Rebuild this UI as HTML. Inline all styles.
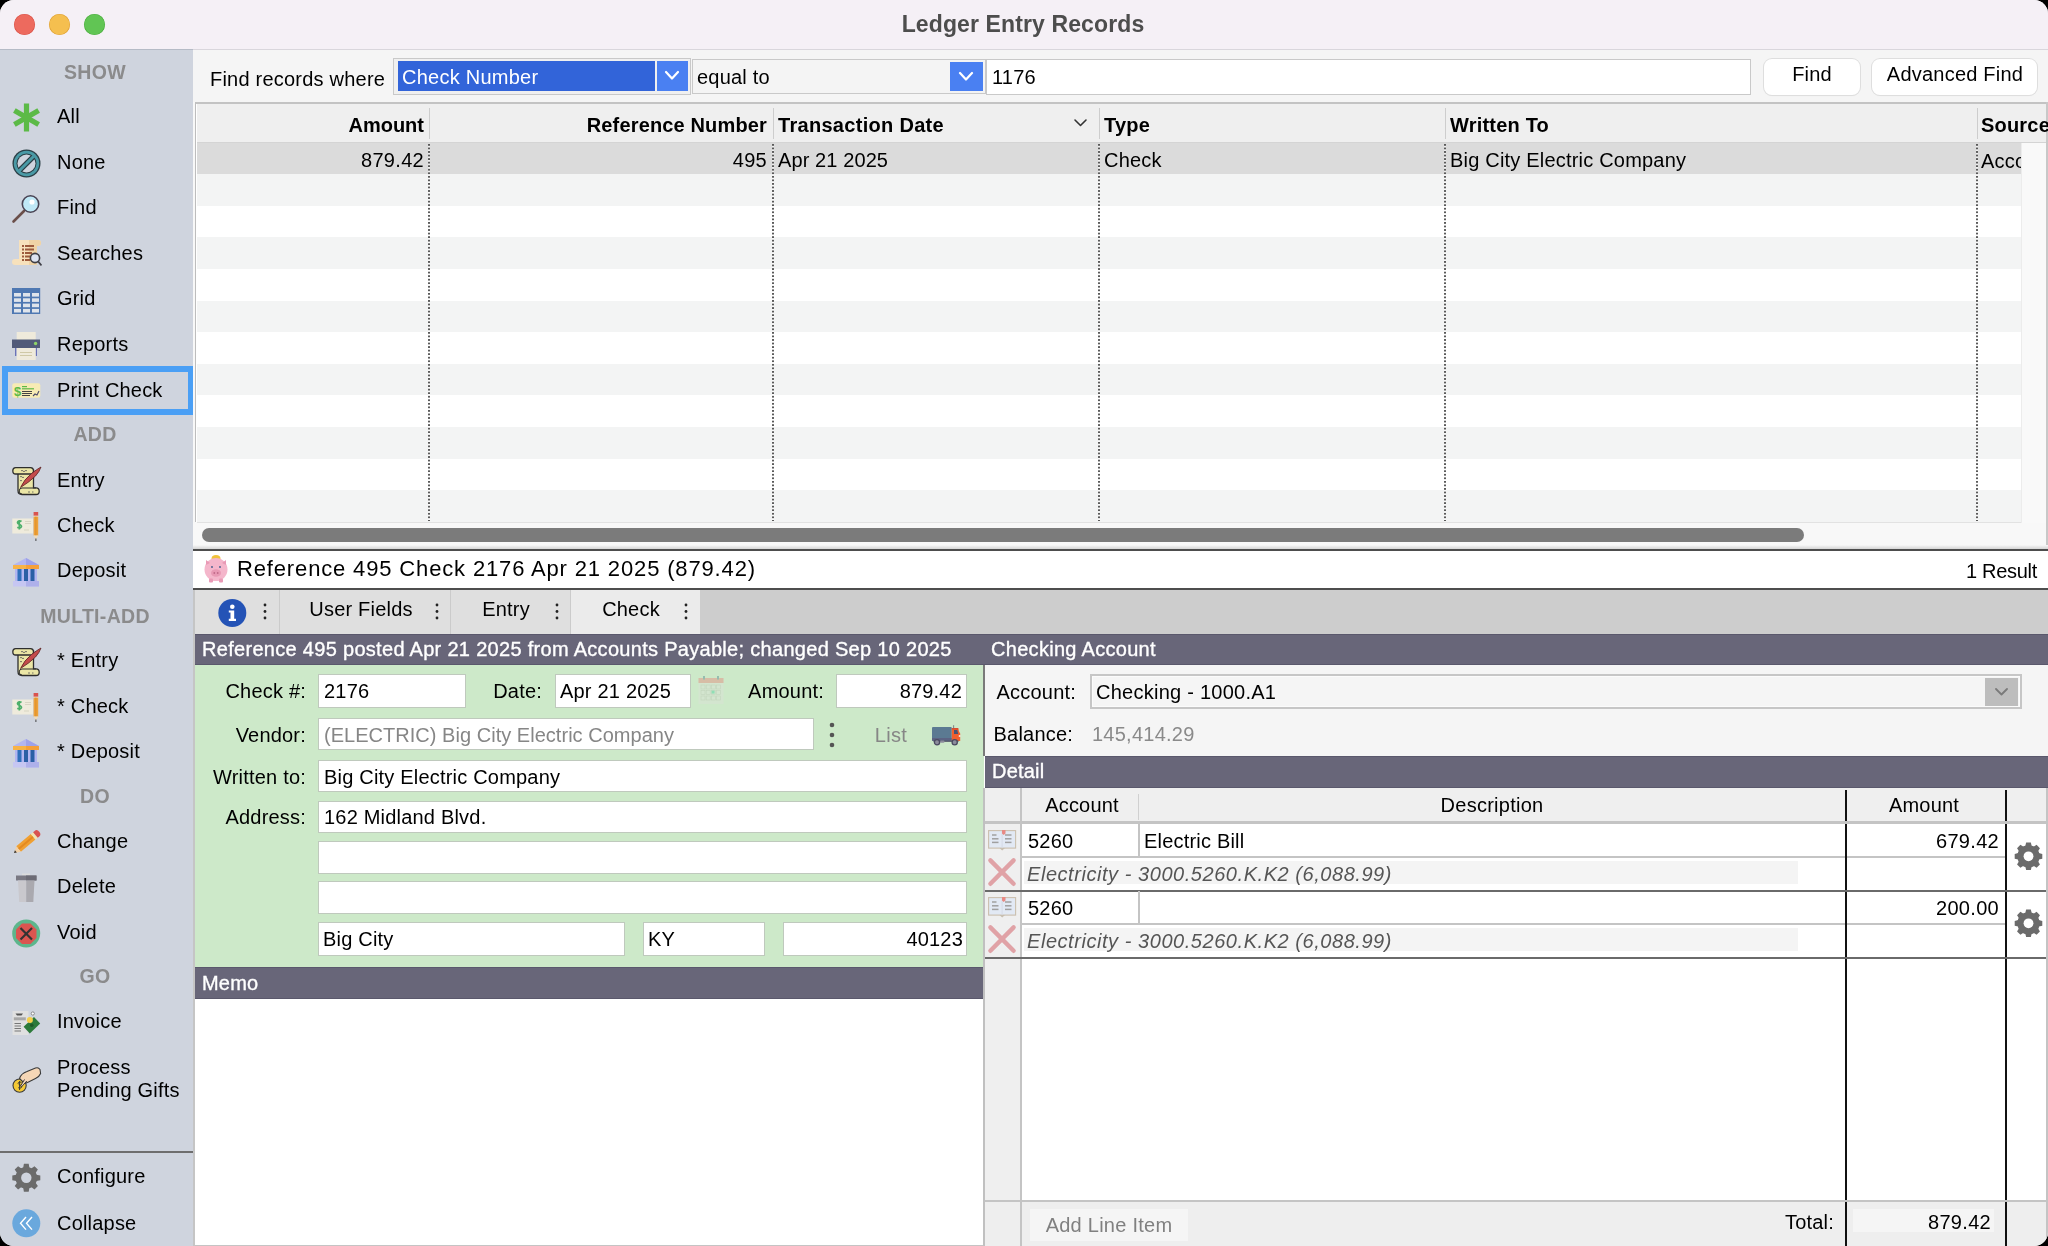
<!DOCTYPE html>
<html><head><meta charset="utf-8"><style>
html,body{margin:0;padding:0;background:#000;width:2048px;height:1246px;overflow:hidden}
#win{position:absolute;left:0;top:0;width:2048px;height:1246px;border-radius:14px;overflow:hidden;background:#f5f5f5;font-family:"Liberation Sans", sans-serif}
.t{position:absolute;white-space:pre;will-change:transform}
</style></head><body><div id="win">
<div style="position:absolute;left:0px;top:0px;width:2048px;height:49px;background:#f5f0f6"></div><div style="position:absolute;left:0px;top:49px;width:2048px;height:1px;background:#d9d6dc"></div><div style="position:absolute;left:14.0px;top:14px;width:21px;height:21px;background:#ed6a5e;border-radius:50%;box-shadow:inset 0 0 0 0.6px #d9544a"></div><div style="position:absolute;left:49.0px;top:14px;width:21px;height:21px;background:#f5bf4f;border-radius:50%;box-shadow:inset 0 0 0 0.6px #dea23a"></div><div style="position:absolute;left:84.0px;top:14px;width:21px;height:21px;background:#61c554;border-radius:50%;box-shadow:inset 0 0 0 0.6px #4fae43"></div><div class="t" style="left:422.5px;width:1200px;text-align:center;top:12.53px;font-size:23px;line-height:23px;font-weight:700;color:#4d4d4d;letter-spacing:0.12px;">Ledger Entry Records</div><div style="position:absolute;left:0px;top:50px;width:193px;height:1196px;background:#cfd4de"></div><div style="position:absolute;left:0px;top:49px;width:193px;height:1px;background:#b5bbc6"></div><div class="t" style="left:-505.5px;width:1200px;text-align:center;top:62.69px;font-size:19.5px;line-height:19.5px;font-weight:700;color:#8b8b8c;letter-spacing:0.3px;">SHOW</div><div class="t" style="left:-505.5px;width:1200px;text-align:center;top:425.39px;font-size:19.5px;line-height:19.5px;font-weight:700;color:#8b8b8c;letter-spacing:0.3px;">ADD</div><div class="t" style="left:-505.5px;width:1200px;text-align:center;top:606.79px;font-size:19.5px;line-height:19.5px;font-weight:700;color:#8b8b8c;letter-spacing:0.3px;">MULTI-ADD</div><div class="t" style="left:-505.5px;width:1200px;text-align:center;top:786.89px;font-size:19.5px;line-height:19.5px;font-weight:700;color:#8b8b8c;letter-spacing:0.3px;">DO</div><div class="t" style="left:-505.5px;width:1200px;text-align:center;top:967.29px;font-size:19.5px;line-height:19.5px;font-weight:700;color:#8b8b8c;letter-spacing:0.3px;">GO</div><div style="position:absolute;left:2px;top:366px;width:192px;height:49px;box-sizing:border-box;border:6px solid #4a9ff5"></div><div class="t" style="left:56.5px;top:106.27px;font-size:20px;line-height:20px;font-weight:400;color:#000;letter-spacing:0.2px;">All</div><div class="t" style="left:56.5px;top:152.07px;font-size:20px;line-height:20px;font-weight:400;color:#000;letter-spacing:0.2px;">None</div><div class="t" style="left:56.5px;top:196.67px;font-size:20px;line-height:20px;font-weight:400;color:#000;letter-spacing:0.2px;">Find</div><div class="t" style="left:56.5px;top:242.57px;font-size:20px;line-height:20px;font-weight:400;color:#000;letter-spacing:0.2px;">Searches</div><div class="t" style="left:56.5px;top:288.27px;font-size:20px;line-height:20px;font-weight:400;color:#000;letter-spacing:0.2px;">Grid</div><div class="t" style="left:56.5px;top:334.07px;font-size:20px;line-height:20px;font-weight:400;color:#000;letter-spacing:0.2px;">Reports</div><div class="t" style="left:56.5px;top:380.07px;font-size:20px;line-height:20px;font-weight:400;color:#000;letter-spacing:0.2px;">Print Check</div><div class="t" style="left:56.5px;top:469.87px;font-size:20px;line-height:20px;font-weight:400;color:#000;letter-spacing:0.2px;">Entry</div><div class="t" style="left:56.5px;top:514.87px;font-size:20px;line-height:20px;font-weight:400;color:#000;letter-spacing:0.2px;">Check</div><div class="t" style="left:56.5px;top:560.47px;font-size:20px;line-height:20px;font-weight:400;color:#000;letter-spacing:0.2px;">Deposit</div><div class="t" style="left:56.5px;top:649.97px;font-size:20px;line-height:20px;font-weight:400;color:#000;letter-spacing:0.2px;">* Entry</div><div class="t" style="left:56.5px;top:695.57px;font-size:20px;line-height:20px;font-weight:400;color:#000;letter-spacing:0.2px;">* Check</div><div class="t" style="left:56.5px;top:740.87px;font-size:20px;line-height:20px;font-weight:400;color:#000;letter-spacing:0.2px;">* Deposit</div><div class="t" style="left:56.5px;top:830.77px;font-size:20px;line-height:20px;font-weight:400;color:#000;letter-spacing:0.2px;">Change</div><div class="t" style="left:56.5px;top:876.27px;font-size:20px;line-height:20px;font-weight:400;color:#000;letter-spacing:0.2px;">Delete</div><div class="t" style="left:56.5px;top:921.87px;font-size:20px;line-height:20px;font-weight:400;color:#000;letter-spacing:0.2px;">Void</div><div class="t" style="left:56.5px;top:1011.27px;font-size:20px;line-height:20px;font-weight:400;color:#000;letter-spacing:0.2px;">Invoice</div><div class="t" style="left:56.5px;top:1057.07px;font-size:20px;line-height:20px;font-weight:400;color:#000;letter-spacing:0.2px;">Process</div><div class="t" style="left:56.5px;top:1079.87px;font-size:20px;line-height:20px;font-weight:400;color:#000;letter-spacing:0.2px;">Pending Gifts</div><div class="t" style="left:56.5px;top:1165.77px;font-size:20px;line-height:20px;font-weight:400;color:#000;letter-spacing:0.2px;">Configure</div><div class="t" style="left:56.5px;top:1213.07px;font-size:20px;line-height:20px;font-weight:400;color:#000;letter-spacing:0.2px;">Collapse</div><div style="position:absolute;left:0px;top:1151px;width:193px;height:2px;background:#6e6e6e"></div><svg style="position:absolute;left:12px;top:103px" width="29" height="29" viewBox="0 0 29 29"><g fill="#5cba47" transform="translate(14.5,14.5)"><rect x="-2.6" y="-14" width="5.2" height="28"/><rect x="-2.6" y="-14" width="5.2" height="28" transform="rotate(60)"/><rect x="-2.6" y="-14" width="5.2" height="28" transform="rotate(-60)"/></g></svg><svg style="position:absolute;left:11px;top:148px" width="31" height="31" viewBox="0 0 31 31"><circle cx="15.5" cy="15.5" r="14" fill="#2b3e45"/><circle cx="15.5" cy="15.5" r="12.7" fill="#4a9aa6"/><circle cx="15.5" cy="15.5" r="10" fill="#2b3e45"/><circle cx="15.5" cy="15.5" r="9" fill="#cfd4de"/><line x1="8.8" y1="22.2" x2="22.2" y2="8.8" stroke="#2b3e45" stroke-width="5.4"/><line x1="8.3" y1="22.7" x2="22.7" y2="8.3" stroke="#4a9aa6" stroke-width="3"/></svg><svg style="position:absolute;left:11px;top:193px" width="31" height="31" viewBox="0 0 31 31"><line x1="2.5" y1="28.5" x2="13" y2="18" stroke="#6b4f4a" stroke-width="2.6" stroke-linecap="round"/><circle cx="19.5" cy="11" r="8.2" fill="#bfe8f6" stroke="#4a4454" stroke-width="1.6"/><circle cx="21" cy="9" r="2.6" fill="#fff"/></svg><svg style="position:absolute;left:12px;top:239px" width="30" height="31" viewBox="0 0 30 31"><path d="M7 1 H26 Q29 1 29 4 Q29 7 26 7 H25 V26 H3 Q0 26 0 23 Q0 20 3 20 H7 Z" fill="#f7e1bc"/><path d="M17 1 H26 Q29 1 29 4 Q29 7 26 7 H25 V26 H17 Z" fill="#efd3a6"/><g fill="#9c5a3c"><rect x="10" y="6" width="2" height="2"/><rect x="13" y="6" width="9" height="2"/><rect x="10" y="9.5" width="2" height="2"/><rect x="13" y="9.5" width="9" height="2"/><rect x="10" y="13" width="2" height="2"/><rect x="13" y="13" width="7" height="2"/><rect x="10" y="16.5" width="2" height="2"/><rect x="13" y="16.5" width="5" height="2"/><rect x="10" y="20" width="2" height="2"/><rect x="13" y="20" width="5" height="2"/></g><circle cx="23" cy="19" r="4.6" fill="#dde3f0" stroke="#3f3f46" stroke-width="1.6"/><line x1="26.2" y1="22.5" x2="29.5" y2="26.5" stroke="#3f3f46" stroke-width="1.8"/></svg><svg style="position:absolute;left:12px;top:288px" width="29" height="27" viewBox="0 0 29 27"><rect x="0" y="0" width="28.2" height="26" fill="#4f78b2"/><rect x="2" y="5.0" width="7" height="3.6" fill="#dfe4eb"/><rect x="11" y="5.0" width="7" height="3.6" fill="#dfe4eb"/><rect x="20" y="5.0" width="7" height="3.6" fill="#dfe4eb"/><rect x="2" y="10.3" width="7" height="3.6" fill="#dfe4eb"/><rect x="11" y="10.3" width="7" height="3.6" fill="#dfe4eb"/><rect x="20" y="10.3" width="7" height="3.6" fill="#dfe4eb"/><rect x="2" y="15.6" width="7" height="3.6" fill="#dfe4eb"/><rect x="11" y="15.6" width="7" height="3.6" fill="#dfe4eb"/><rect x="20" y="15.6" width="7" height="3.6" fill="#dfe4eb"/><rect x="2" y="20.9" width="7" height="3.6" fill="#dfe4eb"/><rect x="11" y="20.9" width="7" height="3.6" fill="#dfe4eb"/><rect x="20" y="20.9" width="7" height="3.6" fill="#dfe4eb"/></svg><svg style="position:absolute;left:12px;top:331px" width="29" height="30" viewBox="0 0 29 30"><rect x="4.7" y="1" width="19" height="9" fill="#efeadb"/><rect x="0" y="8.5" width="28" height="8.5" fill="#515a79"/><circle cx="23.6" cy="12.5" r="1.7" fill="#8fd468"/><rect x="3" y="17" width="1.5" height="8" fill="#6a72b8"/><rect x="23.5" y="17" width="1.5" height="8" fill="#6a72b8"/><rect x="4.7" y="17" width="19" height="12" fill="#efeadb"/><rect x="8" y="21" width="12" height="1" fill="#cfc8a6"/><rect x="8" y="24" width="12" height="1" fill="#cfc8a6"/></svg><svg style="position:absolute;left:12px;top:383px" width="29" height="16" viewBox="0 0 29 16"><rect x="0.3" y="0.2" width="28" height="14.5" rx="2" fill="#f7ebb4"/><text x="2" y="12.5" font-family="Liberation Sans" font-weight="700" font-size="13" fill="#5cba47">$</text><rect x="10" y="3" width="5" height="1.2" fill="#5cba47"/><rect x="10" y="5.2" width="12" height="1.2" fill="#5cba47"/><rect x="10" y="8" width="10" height="1" fill="#444"/><rect x="10" y="10" width="10" height="1" fill="#444"/><rect x="10" y="12" width="8" height="1" fill="#444"/><path d="M21 13 L23 11 L25 12 L27 8" stroke="#4a4a6a" stroke-width="1.1" fill="none"/></svg><svg style="position:absolute;left:12px;top:466px" width="30" height="30" viewBox="0 0 30 30"><path d="M6 4 V24.5 Q6 28.5 10 28.5 H24 Q27.2 28.5 27.2 25.2 Q27.2 21.8 24 21.8 H21.5 V4 Z" fill="#ebe6a6" stroke="#2e2e2e" stroke-width="1.3"/><path d="M3.6 1.6 H18.5 Q21.5 1.6 21.5 4.8 Q21.5 8 18.5 8 H3.6 Q0.8 8 0.8 4.8 Q0.8 1.6 3.6 1.6 Z" fill="#ebe6a6" stroke="#2e2e2e" stroke-width="1.3"/><path d="M10 28 Q7.2 28 7.2 25 Q7.2 22 10 22 H24" fill="none" stroke="#2e2e2e" stroke-width="1"/><g stroke="#555" stroke-width="0.8" fill="none"><path d="M9 5 q1 -1.5 2 0 q1 1.5 2 0 q1 -1.5 2 0"/><path d="M8 11 q1 -1.5 2 0 q1 1.5 2 0"/><path d="M8 15 q1 -1.5 2 0"/><path d="M16 26 h2 M20 26 h1.5"/></g><path d="M8.5 21.5 Q12 13.5 19.5 7.5 Q24.5 3.5 29 1 Q27.5 5.5 23.5 10 Q17.5 16 8.5 21.5 Z" fill="#c44b4b" stroke="#5a2222" stroke-width="0.8"/></svg><svg style="position:absolute;left:12px;top:647px" width="30" height="30" viewBox="0 0 30 30"><path d="M6 4 V24.5 Q6 28.5 10 28.5 H24 Q27.2 28.5 27.2 25.2 Q27.2 21.8 24 21.8 H21.5 V4 Z" fill="#ebe6a6" stroke="#2e2e2e" stroke-width="1.3"/><path d="M3.6 1.6 H18.5 Q21.5 1.6 21.5 4.8 Q21.5 8 18.5 8 H3.6 Q0.8 8 0.8 4.8 Q0.8 1.6 3.6 1.6 Z" fill="#ebe6a6" stroke="#2e2e2e" stroke-width="1.3"/><path d="M10 28 Q7.2 28 7.2 25 Q7.2 22 10 22 H24" fill="none" stroke="#2e2e2e" stroke-width="1"/><g stroke="#555" stroke-width="0.8" fill="none"><path d="M9 5 q1 -1.5 2 0 q1 1.5 2 0 q1 -1.5 2 0"/><path d="M8 11 q1 -1.5 2 0 q1 1.5 2 0"/><path d="M8 15 q1 -1.5 2 0"/><path d="M16 26 h2 M20 26 h1.5"/></g><path d="M8.5 21.5 Q12 13.5 19.5 7.5 Q24.5 3.5 29 1 Q27.5 5.5 23.5 10 Q17.5 16 8.5 21.5 Z" fill="#c44b4b" stroke="#5a2222" stroke-width="0.8"/></svg><svg style="position:absolute;left:12px;top:511px" width="30" height="31" viewBox="0 0 30 31"><rect x="0.3" y="7.5" width="20.7" height="15" fill="#efebdc"/><path d="M9.5 10.5 q-1.6 -1.2 -3.2 -0.2 q-1.6 1.2 0 2.4 l2.4 1.4 q1.6 1.2 0 2.4 q-1.6 1 -3.4 -0.2 M7.3 9 V18.4" fill="none" stroke="#4caf6a" stroke-width="1.7"/><g stroke="#cfcbb8" stroke-width="0.7"><line x1="13" y1="10.5" x2="19" y2="10.5"/><line x1="13" y1="12.5" x2="19" y2="12.5"/><line x1="12" y1="19" x2="17" y2="19"/></g><rect x="21.6" y="1" width="4.6" height="3.8" fill="#d9534f"/><rect x="21.6" y="4.8" width="4.6" height="0.8" fill="#f4ecd8"/><rect x="21.6" y="5.6" width="4.6" height="19" fill="#eea23a"/><rect x="23.5" y="5.6" width="0.8" height="19" fill="#d98a24"/><path d="M21.6 24.6 L26.2 24.6 L23.9 28.5 Z" fill="#f1dcb8"/><line x1="23.9" y1="27.5" x2="23.9" y2="30" stroke="#333" stroke-width="0.9"/></svg><svg style="position:absolute;left:12px;top:692px" width="30" height="31" viewBox="0 0 30 31"><rect x="0.3" y="7.5" width="20.7" height="15" fill="#efebdc"/><path d="M9.5 10.5 q-1.6 -1.2 -3.2 -0.2 q-1.6 1.2 0 2.4 l2.4 1.4 q1.6 1.2 0 2.4 q-1.6 1 -3.4 -0.2 M7.3 9 V18.4" fill="none" stroke="#4caf6a" stroke-width="1.7"/><g stroke="#cfcbb8" stroke-width="0.7"><line x1="13" y1="10.5" x2="19" y2="10.5"/><line x1="13" y1="12.5" x2="19" y2="12.5"/><line x1="12" y1="19" x2="17" y2="19"/></g><rect x="21.6" y="1" width="4.6" height="3.8" fill="#d9534f"/><rect x="21.6" y="4.8" width="4.6" height="0.8" fill="#f4ecd8"/><rect x="21.6" y="5.6" width="4.6" height="19" fill="#eea23a"/><rect x="23.5" y="5.6" width="0.8" height="19" fill="#d98a24"/><path d="M21.6 24.6 L26.2 24.6 L23.9 28.5 Z" fill="#f1dcb8"/><line x1="23.9" y1="27.5" x2="23.9" y2="30" stroke="#333" stroke-width="0.9"/></svg><svg style="position:absolute;left:13px;top:558px" width="27" height="29" viewBox="0 0 27 29"><path d="M13 0 L26 7 L0 7 Z" fill="#b3b6f0"/><path d="M13 0 L26 7 L13 7 Z" fill="#9ea2ea"/><rect x="0" y="7" width="26" height="4" fill="#f7b347"/><rect x="13" y="7" width="13" height="4" fill="#f5a03a"/><rect x="2" y="11" width="22" height="12" fill="#b3b6f0"/><rect x="4.5" y="11" width="4" height="12" fill="#2f70bb"/><rect x="11" y="11" width="4" height="12" fill="#2a5fa5"/><rect x="17.5" y="11" width="4" height="12" fill="#2a5fa5"/><rect x="0" y="23" width="26" height="5.5" fill="#c6c6f2"/><rect x="13" y="23" width="13" height="5.5" fill="#aeb0ea"/></svg><svg style="position:absolute;left:13px;top:739px" width="27" height="29" viewBox="0 0 27 29"><path d="M13 0 L26 7 L0 7 Z" fill="#b3b6f0"/><path d="M13 0 L26 7 L13 7 Z" fill="#9ea2ea"/><rect x="0" y="7" width="26" height="4" fill="#f7b347"/><rect x="13" y="7" width="13" height="4" fill="#f5a03a"/><rect x="2" y="11" width="22" height="12" fill="#b3b6f0"/><rect x="4.5" y="11" width="4" height="12" fill="#2f70bb"/><rect x="11" y="11" width="4" height="12" fill="#2a5fa5"/><rect x="17.5" y="11" width="4" height="12" fill="#2a5fa5"/><rect x="0" y="23" width="26" height="5.5" fill="#c6c6f2"/><rect x="13" y="23" width="13" height="5.5" fill="#aeb0ea"/></svg><svg style="position:absolute;left:11px;top:826px" width="32" height="32" viewBox="0 0 32 32"><g transform="translate(16,16) rotate(-40)"><rect x="-11" y="-3.6" width="19" height="7.2" fill="#f0a032"/><rect x="-11" y="-1" width="19" height="2" fill="#e48a20"/><rect x="8" y="-3.6" width="3" height="7.2" fill="#f2e6b0"/><path d="M11 -3.6 L13 -3.6 Q16 -3.6 16 0 Q16 3.6 13 3.6 L11 3.6 Z" fill="#d9534f"/><path d="M-11 -3.6 L-17 0 L-11 3.6 Z" fill="#f3d1a6"/><path d="M-14.5 -1.5 L-17 0 L-14.5 1.5 Z" fill="#333"/></g></svg><svg style="position:absolute;left:15px;top:873px" width="23" height="31" viewBox="0 0 23 31"><rect x="7" y="0.5" width="8" height="2" fill="#dcdcdc"/><rect x="1" y="2.5" width="20.5" height="5" fill="#7a7983"/><rect x="11" y="2.5" width="10.5" height="5" fill="#6c6b75"/><path d="M3 7.5 L11.2 7.5 L11.2 29 L4.2 29 Z" fill="#c9c8cd"/><path d="M11.2 7.5 L19.5 7.5 L18.3 29 L11.2 29 Z" fill="#aaa9af"/></svg><svg style="position:absolute;left:12px;top:919px" width="29" height="29" viewBox="0 0 29 29"><circle cx="14.2" cy="14.5" r="14" fill="#5db68c"/><path d="M10 4.5 L18.5 4.5 L24.5 10.5 L24.5 19 L18.5 25 L10 25 L4 19 L4 10.5 Z" fill="#db5550"/><g stroke="#333" stroke-width="2.2"><line x1="8.5" y1="9" x2="20" y2="20.5"/><line x1="20" y1="9" x2="8.5" y2="20.5"/></g></svg><svg style="position:absolute;left:12px;top:1009px" width="30" height="28" viewBox="0 0 30 28"><rect x="0.5" y="2" width="16" height="24" fill="#e0e0e0"/><path d="M3.5 4.5 H11 L9.5 6.5 H5 Z" fill="#555"/><rect x="1.8" y="8.3" width="12" height="3" fill="#a8a8a8"/><g fill="#777"><rect x="2.5" y="14" width="6.5" height="1"/><rect x="2.5" y="16.5" width="6.5" height="1"/><rect x="2.5" y="19" width="6.5" height="1"/><rect x="2.5" y="21.5" width="6.5" height="1"/></g><path d="M11.6 17.8 L22 8 L28.2 14.5 L17.8 24.6 Z" fill="#2c7a3a"/><circle cx="19.8" cy="16.3" r="1.8" fill="#1f5a28"/><circle cx="17.9" cy="11" r="3" fill="#f5d04a"/><circle cx="20.8" cy="4.5" r="1.6" fill="#fff" stroke="#777" stroke-width="0.8"/></svg><svg style="position:absolute;left:12px;top:1063px" width="30" height="32" viewBox="0 0 30 32"><circle cx="7.6" cy="22.6" r="6.6" fill="#f4c935" stroke="#3a3a3a" stroke-width="1.1"/><path d="M9.5 19.5 q-1.5 -1 -3 0 q-1 1 0.5 2 l2 1 q1.5 1 0.3 2.2 q-1.4 1 -3 0 M7.6 18 V27" fill="none" stroke="#3a3a3a" stroke-width="1"/><path d="M7.5 15.5 Q9 10.5 15 8.5 L23.5 5 Q26.5 4 28 6.5 L28.6 10.5 Q27.5 13.5 23.5 15.5 L16.5 19 Q13.5 20.5 11.5 19.5 Z" fill="#f5d6b6" stroke="#3a3a3a" stroke-width="1.1"/><path d="M12.5 16.5 L8.8 22.5 Q8.4 24 9.8 23.5 L14.8 18" fill="#f5d6b6" stroke="#3a3a3a" stroke-width="1"/></svg><svg style="position:absolute;left:11px;top:1163px" width="31" height="31" viewBox="0 0 31 31"><polygon points="25.33,11.70 29.30,12.40 29.30,17.20 25.33,17.90 24.59,19.70 26.89,23.00 23.50,26.39 20.20,24.09 18.40,24.83 17.70,28.80 12.90,28.80 12.20,24.83 10.40,24.09 7.10,26.39 3.71,23.00 6.01,19.70 5.27,17.90 1.30,17.20 1.30,12.40 5.27,11.70 6.01,9.90 3.71,6.60 7.10,3.21 10.40,5.51 12.20,4.77 12.90,0.80 17.70,0.80 18.40,4.77 20.20,5.51 23.50,3.21 26.89,6.60 24.59,9.90" fill="#6b6b6b"/><circle cx="15.3" cy="14.8" r="10.8" fill="#6b6b6b"/><circle cx="15.3" cy="14.8" r="5.2" fill="#cfd4de"/></svg><svg style="position:absolute;left:12px;top:1209px" width="29" height="29" viewBox="0 0 29 29"><circle cx="14.3" cy="14.3" r="14" fill="#6aa8dd"/><g stroke="#fff" stroke-width="1.4" fill="none"><path d="M14 8 L8.5 14.3 L14 20.6"/><path d="M20 8 L14.5 14.3 L20 20.6"/></g></svg><div style="position:absolute;left:193px;top:50px;width:1855px;height:52px;background:#f5f5f5"></div><div class="t" style="left:210px;top:69.07px;font-size:20px;line-height:20px;font-weight:400;color:#000;letter-spacing:0.22px;">Find records where</div><div style="position:absolute;left:393px;top:58px;width:298px;height:36.5px;background:#f0f0f0;box-sizing:border-box;border:1.5px solid #c9c9c9"></div><div style="position:absolute;left:398px;top:61px;width:256.5px;height:30px;background:#3264d9"></div><div style="position:absolute;left:656.5px;top:61px;width:31.5px;height:30px;background:#4a80f2"></div><div class="t" style="left:402px;top:66.67px;font-size:20px;line-height:20px;font-weight:400;color:#fff;letter-spacing:0.25px;">Check Number</div><svg style="position:absolute;left:663.5px;top:70.25px" width="16" height="10.5" viewBox="0 0 16 10.5"><path d="M2 2 L8.0 8.5 L14 2" fill="none" stroke="#fff" stroke-width="2.2" stroke-linecap="round" stroke-linejoin="round"/></svg><div style="position:absolute;left:692px;top:59px;width:294px;height:35px;background:#f4f4f4;box-sizing:border-box;border:1.5px solid #c9c9c9"></div><div style="position:absolute;left:949.5px;top:61.5px;width:33.5px;height:29.5px;background:#4a80f2"></div><svg style="position:absolute;left:958.0px;top:70.75px" width="16" height="10.5" viewBox="0 0 16 10.5"><path d="M2 2 L8.0 8.5 L14 2" fill="none" stroke="#fff" stroke-width="2.2" stroke-linecap="round" stroke-linejoin="round"/></svg><div class="t" style="left:697px;top:67.07px;font-size:20px;line-height:20px;font-weight:400;color:#000;letter-spacing:0.22px;">equal to</div><div style="position:absolute;left:986px;top:59px;width:765px;height:36px;background:#fff;box-sizing:border-box;border:1.5px solid #c9c9c9"></div><div class="t" style="left:992px;top:67.07px;font-size:20px;line-height:20px;font-weight:400;color:#000;letter-spacing:0.2px;">1176</div><div style="position:absolute;left:1763.5px;top:58.5px;width:96.5px;height:36px;background:#fff;border-radius:8px;box-shadow:0 0 0 1px #dedede, 0 1px 1px rgba(0,0,0,0.08)"></div><div class="t" style="left:1211.7px;width:1200px;text-align:center;top:64.07px;font-size:20px;line-height:20px;font-weight:400;color:#000;letter-spacing:0.2px;">Find</div><div style="position:absolute;left:1872px;top:58.5px;width:165.3px;height:36px;background:#fff;border-radius:8px;box-shadow:0 0 0 1px #dedede, 0 1px 1px rgba(0,0,0,0.08)"></div><div class="t" style="left:1354.6px;width:1200px;text-align:center;top:64.07px;font-size:20px;line-height:20px;font-weight:400;color:#000;letter-spacing:0.22px;">Advanced Find</div><div style="position:absolute;left:193px;top:102px;width:1855px;height:449px;background:#f8f8f8"></div><div style="position:absolute;left:195px;top:102px;width:1851px;height:420px;box-sizing:border-box;border-top:2px solid #c3c3c3;border-left:1.5px solid #bdbdbd;background:#fff"></div><div style="position:absolute;left:196.5px;top:104px;width:1849.5px;height:38px;background:#efefef"></div><div style="position:absolute;left:196.5px;top:141.5px;width:1849.5px;height:1px;background:#d4d4d4"></div><div style="position:absolute;left:196.5px;top:142.5px;width:1824px;height:31.3px;background:#dbdbdb"></div><div style="position:absolute;left:196.5px;top:174.2px;width:1824.3px;height:31.6px;background:#f3f4f4"></div><div style="position:absolute;left:196.5px;top:237.39999999999998px;width:1824.3px;height:31.6px;background:#f3f4f4"></div><div style="position:absolute;left:196.5px;top:300.6px;width:1824.3px;height:31.6px;background:#f3f4f4"></div><div style="position:absolute;left:196.5px;top:363.80000000000007px;width:1824.3px;height:31.6px;background:#f3f4f4"></div><div style="position:absolute;left:196.5px;top:427.0000000000001px;width:1824.3px;height:31.6px;background:#f3f4f4"></div><div style="position:absolute;left:196.5px;top:490.20000000000016px;width:1824.3px;height:31.499999999999886px;background:#f3f4f4"></div><div style="position:absolute;left:196.5px;top:521.5px;width:1824.3px;height:1px;background:#e2e2e2"></div><div style="position:absolute;left:2020.8px;top:142.5px;width:25px;height:380px;background:#f9f9f9;box-shadow:inset 1px 0 0 #ececec"></div><div style="position:absolute;left:2045.5px;top:102px;width:2.5px;height:449px;background:#c8c8c8"></div><div style="position:absolute;left:428.5px;top:108px;width:1px;height:31px;background:#cdcdcd"></div><div style="position:absolute;left:428px;top:144px;width:2px;height:377px;background-image:linear-gradient(#5a5a5a 50%, rgba(255,255,255,0.55) 50%);background-size:2px 3.55px"></div><div style="position:absolute;left:772.5px;top:108px;width:1px;height:31px;background:#cdcdcd"></div><div style="position:absolute;left:772px;top:144px;width:2px;height:377px;background-image:linear-gradient(#5a5a5a 50%, rgba(255,255,255,0.55) 50%);background-size:2px 3.55px"></div><div style="position:absolute;left:1098.5px;top:108px;width:1px;height:31px;background:#cdcdcd"></div><div style="position:absolute;left:1098px;top:144px;width:2px;height:377px;background-image:linear-gradient(#5a5a5a 50%, rgba(255,255,255,0.55) 50%);background-size:2px 3.55px"></div><div style="position:absolute;left:1444.5px;top:108px;width:1px;height:31px;background:#cdcdcd"></div><div style="position:absolute;left:1444px;top:144px;width:2px;height:377px;background-image:linear-gradient(#5a5a5a 50%, rgba(255,255,255,0.55) 50%);background-size:2px 3.55px"></div><div style="position:absolute;left:1976.5px;top:108px;width:1px;height:31px;background:#cdcdcd"></div><div style="position:absolute;left:1976px;top:144px;width:2px;height:377px;background-image:linear-gradient(#5a5a5a 50%, rgba(255,255,255,0.55) 50%);background-size:2px 3.55px"></div><div class="t" style="left:-776px;width:1200px;text-align:right;top:115.27px;font-size:20px;line-height:20px;font-weight:700;color:#000;letter-spacing:0.0px;">Amount</div><div class="t" style="left:-433px;width:1200px;text-align:right;top:115.27px;font-size:20px;line-height:20px;font-weight:700;color:#000;letter-spacing:0.15px;">Reference Number</div><div class="t" style="left:778px;top:115.27px;font-size:20px;line-height:20px;font-weight:700;color:#000;letter-spacing:0.3px;">Transaction Date</div><svg style="position:absolute;left:1072.5px;top:118.25px" width="15" height="9.5" viewBox="0 0 15 9.5"><path d="M2 2 L7.5 7.5 L13 2" fill="none" stroke="#333" stroke-width="1.6" stroke-linecap="round" stroke-linejoin="round"/></svg><div class="t" style="left:1104px;top:115.27px;font-size:20px;line-height:20px;font-weight:700;color:#000;letter-spacing:0.2px;">Type</div><div class="t" style="left:1450px;top:115.27px;font-size:20px;line-height:20px;font-weight:700;color:#000;letter-spacing:0.2px;">Written To</div><div class="t" style="left:1981px;top:115.27px;font-size:20px;line-height:20px;font-weight:700;color:#000;letter-spacing:0.2px;">Source</div><div class="t" style="left:-776px;width:1200px;text-align:right;top:150.47px;font-size:20px;line-height:20px;font-weight:400;color:#000;letter-spacing:0.3px;">879.42</div><div class="t" style="left:-433.5px;width:1200px;text-align:right;top:150.47px;font-size:20px;line-height:20px;font-weight:400;color:#000;letter-spacing:0.3px;">495</div><div class="t" style="left:778px;top:150.47px;font-size:20px;line-height:20px;font-weight:400;color:#000;letter-spacing:0.1px;">Apr 21 2025</div><div class="t" style="left:1104px;top:150.47px;font-size:20px;line-height:20px;font-weight:400;color:#000;letter-spacing:0.2px;">Check</div><div class="t" style="left:1450px;top:150.47px;font-size:20px;line-height:20px;font-weight:400;color:#000;letter-spacing:0.2px;">Big City Electric Company</div><div style="position:absolute;left:1979px;top:142.5px;width:41.8px;height:31px;overflow:hidden"><div class="t" style="left:2px;top:8.5px;font-size:20px;line-height:20px;letter-spacing:0.2px">Accounts</div></div><div style="position:absolute;left:202px;top:528.2px;width:1602px;height:13.7px;background:#7b7b7b;border-radius:7px"></div><div style="position:absolute;left:193px;top:545px;width:1855px;height:4px;background:linear-gradient(#f8f8f8,#d5d5d5)"></div><div style="position:absolute;left:193px;top:549px;width:1855px;height:2px;background:#4d4d4d"></div><div style="position:absolute;left:193px;top:551px;width:1855px;height:37.5px;background:#fff"></div><div style="position:absolute;left:193px;top:588px;width:1855px;height:1.5px;background:#4d4d4d"></div><div class="t" style="left:237.4px;top:558.48px;font-size:22px;line-height:22px;font-weight:400;color:#000;letter-spacing:0.85px;">Reference 495 Check 2176 Apr 21 2025 (879.42)</div><div class="t" style="left:836.5px;width:1200px;text-align:right;top:560.57px;font-size:20px;line-height:20px;font-weight:400;color:#000;letter-spacing:-0.3px;">1 Result</div><svg style="position:absolute;left:203px;top:554px" width="26" height="29" viewBox="0 0 26 29"><ellipse cx="13" cy="4.5" rx="4.5" ry="3.5" fill="#f0c23a"/><circle cx="13" cy="15.5" r="11.5" fill="#f4b6cb"/><path d="M3 6 L7 9 L3 11 Z" fill="#e99ab6"/><path d="M23 6 L19 9 L23 11 Z" fill="#e99ab6"/><ellipse cx="13" cy="19" rx="5" ry="3.8" fill="#e899b4"/><circle cx="11.3" cy="19" r="0.9" fill="#c06a8a"/><circle cx="14.7" cy="19" r="0.9" fill="#c06a8a"/><circle cx="9" cy="13" r="0.9" fill="#3c5a8a"/><circle cx="17" cy="13" r="0.9" fill="#3c5a8a"/><rect x="6" y="24.5" width="4" height="4" rx="1" fill="#e99ab6"/><rect x="16" y="24.5" width="4" height="4" rx="1" fill="#e99ab6"/></svg><div style="position:absolute;left:193px;top:589.5px;width:1855px;height:44.5px;background:#cdcdcd"></div><div style="position:absolute;left:195px;top:589.5px;width:84px;height:44.5px;background:#dfdfdf"></div><div style="position:absolute;left:279px;top:589.5px;width:172px;height:44.5px;background:#dfdfdf;box-shadow:inset 1px 0 0 #cbcbcb, inset -1px 0 0 #cbcbcb"></div><div style="position:absolute;left:451px;top:589.5px;width:120px;height:44.5px;background:#dfdfdf;box-shadow:inset -1px 0 0 #cbcbcb"></div><div style="position:absolute;left:571px;top:589.5px;width:128.5px;height:44.5px;background:#ebebeb"></div><div style="position:absolute;left:193px;top:589.5px;width:2px;height:44.5px;background:#c5c5c5"></div><svg style="position:absolute;left:217.5px;top:598.5px" width="29" height="29" viewBox="0 0 29 29"><circle cx="14.3" cy="14" r="14" fill="#2453b6"/><circle cx="14.3" cy="7.8" r="2.3" fill="#fff"/><path d="M10.8 11.5 H16.2 V19.8 H18 V22 H10.8 V19.8 H12.5 V13.6 H10.8 Z" fill="#fff"/></svg><svg style="position:absolute;left:262px;top:602.3px" width="6" height="19.0" viewBox="0 0 6 19.0"><circle cx="3" cy="3.0" r="1.4" fill="#222"/><circle cx="3" cy="9.5" r="1.4" fill="#222"/><circle cx="3" cy="16.0" r="1.4" fill="#222"/></svg><div class="t" style="left:-239.5px;width:1200px;text-align:center;top:599.27px;font-size:20px;line-height:20px;font-weight:400;color:#000;letter-spacing:0.2px;">User Fields</div><svg style="position:absolute;left:434.4px;top:602.3px" width="6" height="19.0" viewBox="0 0 6 19.0"><circle cx="3" cy="3.0" r="1.4" fill="#222"/><circle cx="3" cy="9.5" r="1.4" fill="#222"/><circle cx="3" cy="16.0" r="1.4" fill="#222"/></svg><div class="t" style="left:-94.0px;width:1200px;text-align:center;top:599.27px;font-size:20px;line-height:20px;font-weight:400;color:#000;letter-spacing:0.2px;">Entry</div><svg style="position:absolute;left:553.5px;top:602.3px" width="6" height="19.0" viewBox="0 0 6 19.0"><circle cx="3" cy="3.0" r="1.4" fill="#222"/><circle cx="3" cy="9.5" r="1.4" fill="#222"/><circle cx="3" cy="16.0" r="1.4" fill="#222"/></svg><div class="t" style="left:30.5px;width:1200px;text-align:center;top:599.27px;font-size:20px;line-height:20px;font-weight:400;color:#000;letter-spacing:0.2px;">Check</div><svg style="position:absolute;left:682.5px;top:602.3px" width="6" height="19.0" viewBox="0 0 6 19.0"><circle cx="3" cy="3.0" r="1.4" fill="#222"/><circle cx="3" cy="9.5" r="1.4" fill="#222"/><circle cx="3" cy="16.0" r="1.4" fill="#222"/></svg><div style="position:absolute;left:193px;top:634px;width:791px;height:612px;background:#fff"></div><div style="position:absolute;left:193px;top:634px;width:2px;height:612px;background:#c5c5c5"></div><div style="position:absolute;left:195px;top:634px;width:789px;height:31px;background:#686679;box-shadow:inset 0 1px 0 #5a586c, inset 0 -1px 0 #5a586c"></div><div class="t" style="left:202px;top:639.07px;font-size:20px;line-height:20px;font-weight:400;color:#fff;letter-spacing:0.3px;-webkit-text-stroke:0.35px #fff">Reference 495 posted Apr 21 2025 from Accounts Payable; changed Sep 10 2025</div><div style="position:absolute;left:195px;top:665px;width:789px;height:302px;background:#cde9c9"></div><div style="position:absolute;left:195px;top:967px;width:789px;height:32px;background:#686679;box-shadow:inset 0 1px 0 #5a586c, inset 0 -1px 0 #5a586c"></div><div class="t" style="left:202px;top:972.57px;font-size:20px;line-height:20px;font-weight:400;color:#fff;letter-spacing:0.2px;-webkit-text-stroke:0.35px #fff">Memo</div><div class="t" style="left:-894.4px;width:1200px;text-align:right;top:681.07px;font-size:20px;line-height:20px;font-weight:400;color:#000;letter-spacing:0.2px;">Check #:</div><div style="position:absolute;left:318px;top:674.4px;width:148.4px;height:34px;background:#fff;box-sizing:border-box;border:1.5px solid #bfc9bd"></div><div class="t" style="left:323.6px;top:681.07px;font-size:20px;line-height:20px;font-weight:400;color:#000;letter-spacing:0.2px;">2176</div><div class="t" style="left:-657.6px;width:1200px;text-align:right;top:681.07px;font-size:20px;line-height:20px;font-weight:400;color:#000;letter-spacing:0.2px;">Date:</div><div style="position:absolute;left:554.5px;top:674.4px;width:136.5px;height:34px;background:#fff;box-sizing:border-box;border:1.5px solid #bfc9bd"></div><div class="t" style="left:560.1px;top:681.07px;font-size:20px;line-height:20px;font-weight:400;color:#000;letter-spacing:0.2px;">Apr 21 2025</div><svg style="position:absolute;left:697px;top:675px" width="28" height="30" viewBox="0 0 28 30"><g opacity="0.55"><rect x="1.5" y="3" width="25" height="26" fill="#d9e2d4"/><rect x="1.5" y="3" width="25" height="5" fill="#e09a8a"/><rect x="6" y="1" width="2" height="3.5" fill="#6a9a9a"/><rect x="20" y="1" width="2" height="3.5" fill="#6a9a9a"/><rect x="4.0" y="10.0" width="4" height="4" fill="none" stroke="#b9c6b3" stroke-width="0.6"/><rect x="9.2" y="10.0" width="4" height="4" fill="none" stroke="#b9c6b3" stroke-width="0.6"/><rect x="14.4" y="10.0" width="4" height="4" fill="none" stroke="#b9c6b3" stroke-width="0.6"/><rect x="19.6" y="10.0" width="4" height="4" fill="none" stroke="#b9c6b3" stroke-width="0.6"/><rect x="4.0" y="15.5" width="4" height="4" fill="none" stroke="#b9c6b3" stroke-width="0.6"/><rect x="9.2" y="15.5" width="4" height="4" fill="none" stroke="#b9c6b3" stroke-width="0.6"/><rect x="14.4" y="15.5" width="4" height="4" fill="none" stroke="#b9c6b3" stroke-width="0.6"/><rect x="19.6" y="15.5" width="4" height="4" fill="none" stroke="#b9c6b3" stroke-width="0.6"/><rect x="4.0" y="21.0" width="4" height="4" fill="none" stroke="#b9c6b3" stroke-width="0.6"/><rect x="9.2" y="21.0" width="4" height="4" fill="none" stroke="#b9c6b3" stroke-width="0.6"/><rect x="14.4" y="21.0" width="4" height="4" fill="none" stroke="#b9c6b3" stroke-width="0.6"/><rect x="19.6" y="21.0" width="4" height="4" fill="none" stroke="#b9c6b3" stroke-width="0.6"/><rect x="14.6" y="15.6" width="3" height="3" fill="#5fd6a6"/></g></svg><div class="t" style="left:-376.20000000000005px;width:1200px;text-align:right;top:681.07px;font-size:20px;line-height:20px;font-weight:400;color:#000;letter-spacing:0.2px;">Amount:</div><div style="position:absolute;left:835.6px;top:674.4px;width:131.2px;height:34px;background:#fff;box-sizing:border-box;border:1.5px solid #bfc9bd"></div><div class="t" style="left:-237.70000000000005px;width:1200px;text-align:right;top:681.07px;font-size:20px;line-height:20px;font-weight:400;color:#000;letter-spacing:0.2px;">879.42</div><div class="t" style="left:-894.4px;width:1200px;text-align:right;top:725.07px;font-size:20px;line-height:20px;font-weight:400;color:#000;letter-spacing:0.2px;">Vendor:</div><div style="position:absolute;left:318px;top:718.4px;width:495.7px;height:32px;background:#fff;box-sizing:border-box;border:1.5px solid #bfc9bd"></div><div class="t" style="left:323.6px;top:725.07px;font-size:20px;line-height:20px;font-weight:400;color:#868686;letter-spacing:0.03px;">(ELECTRIC) Big City Electric Company</div><svg style="position:absolute;left:828.8px;top:722px" width="6" height="26" viewBox="0 0 6 26"><circle cx="3" cy="3" r="2.3" fill="#555"/><circle cx="3" cy="13" r="2.3" fill="#555"/><circle cx="3" cy="23" r="2.3" fill="#555"/></svg><div class="t" style="left:290.5px;width:1200px;text-align:center;top:725.07px;font-size:20px;line-height:20px;font-weight:400;color:#868686;letter-spacing:0.3px;">List</div><svg style="position:absolute;left:931px;top:724px" width="30" height="22" viewBox="0 0 30 22"><rect x="1" y="3" width="19.8" height="13.8" rx="1" fill="#5b7a92"/><rect x="1" y="14" width="19.8" height="2.8" fill="#5c6383"/><path d="M20.8 4.2 H27.2 L28 7.5 L29.2 9.5 V17 H20.8 Z" fill="#f15f2e"/><rect x="20.8" y="4.2" width="6.5" height="1.2" fill="#d2402a"/><path d="M23 6 H26.3 L27.2 10 H23 Z" fill="#4a5272"/><rect x="27.8" y="11.2" width="1.6" height="1.6" fill="#fff"/><rect x="2.5" y="16.6" width="25" height="1.2" fill="#4a4a60"/><rect x="9" y="16.6" width="4.5" height="2.2" rx="1" fill="#8c8c9c"/><circle cx="6" cy="18.2" r="2.6" fill="#8c8c9c" stroke="#4a4a60" stroke-width="1.3"/><circle cx="23.7" cy="18.2" r="2.6" fill="#8c8c9c" stroke="#4a4a60" stroke-width="1.3"/><rect x="22.3" y="1.2" width="0.8" height="3" fill="#667"/></svg><div class="t" style="left:-894.4px;width:1200px;text-align:right;top:767.07px;font-size:20px;line-height:20px;font-weight:400;color:#000;letter-spacing:0.2px;">Written to:</div><div style="position:absolute;left:318px;top:760.4px;width:648.7px;height:32px;background:#fff;box-sizing:border-box;border:1.5px solid #bfc9bd"></div><div class="t" style="left:323.6px;top:767.07px;font-size:20px;line-height:20px;font-weight:400;color:#000;letter-spacing:0.2px;">Big City Electric Company</div><div class="t" style="left:-894.4px;width:1200px;text-align:right;top:807.47px;font-size:20px;line-height:20px;font-weight:400;color:#000;letter-spacing:0.2px;">Address:</div><div style="position:absolute;left:318px;top:800.8px;width:648.7px;height:32.4px;background:#fff;box-sizing:border-box;border:1.5px solid #bfc9bd"></div><div class="t" style="left:323.6px;top:807.47px;font-size:20px;line-height:20px;font-weight:400;color:#000;letter-spacing:0.2px;">162 Midland Blvd.</div><div style="position:absolute;left:318px;top:841px;width:648.7px;height:32.5px;background:#fff;box-sizing:border-box;border:1.5px solid #bfc9bd"></div><div style="position:absolute;left:318px;top:881.4px;width:648.7px;height:32.5px;background:#fff;box-sizing:border-box;border:1.5px solid #bfc9bd"></div><div style="position:absolute;left:317.8px;top:921.8px;width:306.9px;height:34px;background:#fff;box-sizing:border-box;border:1.5px solid #bfc9bd"></div><div class="t" style="left:323.40000000000003px;top:928.57px;font-size:20px;line-height:20px;font-weight:400;color:#000;letter-spacing:0.2px;">Big City</div><div style="position:absolute;left:642.5px;top:921.8px;width:122.3px;height:34px;background:#fff;box-sizing:border-box;border:1.5px solid #bfc9bd"></div><div class="t" style="left:648.1px;top:928.57px;font-size:20px;line-height:20px;font-weight:400;color:#000;letter-spacing:0.2px;">KY</div><div style="position:absolute;left:783px;top:921.8px;width:184px;height:34px;background:#fff;box-sizing:border-box;border:1.5px solid #bfc9bd"></div><div class="t" style="left:-237.5px;width:1200px;text-align:right;top:928.57px;font-size:20px;line-height:20px;font-weight:400;color:#000;letter-spacing:0.2px;">40123</div><div style="position:absolute;left:983.5px;top:634px;width:1064.5px;height:612px;background:#fff"></div><div style="position:absolute;left:983px;top:665px;width:1.5px;height:91px;background:#7a7a7a"></div><div style="position:absolute;left:983px;top:788px;width:2.5px;height:458px;background:#c0c0c0"></div><div style="position:absolute;left:983px;top:634px;width:1065px;height:31px;background:#686679;box-shadow:inset 0 1px 0 #5a586c, inset 0 -1px 0 #5a586c"></div><div class="t" style="left:991.3px;top:639.07px;font-size:20px;line-height:20px;font-weight:400;color:#fff;letter-spacing:0.3px;-webkit-text-stroke:0.35px #fff">Checking Account</div><div style="position:absolute;left:984.5px;top:665px;width:1063.5px;height:91px;background:#f5f5f5"></div><div class="t" style="left:-124.5px;width:1200px;text-align:right;top:681.57px;font-size:20px;line-height:20px;font-weight:400;color:#000;letter-spacing:0.2px;">Account:</div><div style="position:absolute;left:1090px;top:674px;width:931.5px;height:34.7px;background:#f5f5f5;box-sizing:border-box;border:2px solid #c6c6c6;box-shadow:inset 0 0 0 1px #fbfbfb"></div><div style="position:absolute;left:1985px;top:677.5px;width:33px;height:28px;background:#bdbdbd"></div><svg style="position:absolute;left:1994.0px;top:686.75px" width="15" height="9.5" viewBox="0 0 15 9.5"><path d="M2 2 L7.5 7.5 L13 2" fill="none" stroke="#7a7a7a" stroke-width="1.8" stroke-linecap="round" stroke-linejoin="round"/></svg><div class="t" style="left:1095.5px;top:681.57px;font-size:20px;line-height:20px;font-weight:400;color:#000;letter-spacing:0.25px;">Checking - 1000.A1</div><div class="t" style="left:-127.5px;width:1200px;text-align:right;top:724.07px;font-size:20px;line-height:20px;font-weight:400;color:#000;letter-spacing:0.2px;">Balance:</div><div class="t" style="left:1091.7px;top:724.07px;font-size:20px;line-height:20px;font-weight:400;color:#8a8a8a;letter-spacing:0.25px;">145,414.29</div><div style="position:absolute;left:984.5px;top:756px;width:1063.5px;height:32px;background:#686679;box-shadow:inset 0 1px 0 #5a586c, inset 0 -1px 0 #5a586c"></div><div class="t" style="left:992px;top:761.07px;font-size:20px;line-height:20px;font-weight:400;color:#fff;letter-spacing:0.2px;-webkit-text-stroke:0.35px #fff">Detail</div><div style="position:absolute;left:985px;top:788px;width:1061px;height:458px;background:#fff"></div><div style="position:absolute;left:985px;top:788px;width:1061px;height:33.5px;background:#efefef"></div><div style="position:absolute;left:985px;top:788px;width:35px;height:458px;background:#efefef"></div><div style="position:absolute;left:1020px;top:788px;width:2px;height:458px;background:#c4c4c4"></div><div style="position:absolute;left:985px;top:821px;width:1061px;height:3px;background:#c4c4c4"></div><div style="position:absolute;left:1138px;top:794px;width:1px;height:26px;background:#d0d0d0"></div><div class="t" style="left:482.0px;width:1200px;text-align:center;top:795.07px;font-size:20px;line-height:20px;font-weight:400;color:#000;letter-spacing:0.2px;">Account</div><div class="t" style="left:892.0px;width:1200px;text-align:center;top:795.07px;font-size:20px;line-height:20px;font-weight:400;color:#000;letter-spacing:0.25px;">Description</div><div class="t" style="left:1324.0px;width:1200px;text-align:center;top:795.07px;font-size:20px;line-height:20px;font-weight:400;color:#000;letter-spacing:0.2px;">Amount</div><div style="position:absolute;left:1844.5px;top:790px;width:2px;height:410px;background:#111"></div><div style="position:absolute;left:2004.5px;top:790px;width:2px;height:410px;background:#111"></div><div style="position:absolute;left:985px;top:821px;width:1061px;height:3px;background:#c4c4c4"></div><div style="position:absolute;left:2046px;top:788px;width:2px;height:458px;background:#c4c4c4"></div><div style="position:absolute;left:1138px;top:824px;width:2px;height:32px;background:#c4c4c4"></div><div style="position:absolute;left:1022px;top:856px;width:823px;height:2px;background:#c4c4c4"></div><div style="position:absolute;left:1846.5px;top:856px;width:158px;height:2px;background:#c4c4c4"></div><div class="t" style="left:1028px;top:831.07px;font-size:20px;line-height:20px;font-weight:400;color:#000;letter-spacing:0.25px;">5260</div><div class="t" style="left:1144px;top:831.07px;font-size:20px;line-height:20px;font-weight:400;color:#000;letter-spacing:0.2px;">Electric Bill</div><div class="t" style="left:799px;width:1200px;text-align:right;top:831.07px;font-size:20px;line-height:20px;font-weight:400;color:#000;letter-spacing:0.3px;">679.42</div><div style="position:absolute;left:1024px;top:861px;width:774px;height:23px;background:#f4f4f4"></div><div class="t" style="left:1027px;top:864.07px;font-size:20px;line-height:20px;font-weight:400;color:#555;letter-spacing:0.55px;font-style:italic;">Electricity - 3000.5260.K.K2 (6,088.99)</div><div style="position:absolute;left:985px;top:890px;width:1061px;height:1.5px;background:#6a6a6a"></div><svg style="position:absolute;left:987px;top:829px" width="30" height="22" viewBox="0 0 30 22"><rect x="1.6" y="1.6" width="27" height="17.5" fill="#e2e9f4" stroke="#cbbfae" stroke-width="1.1"/><line x1="15.1" y1="2" x2="15.1" y2="19" stroke="#d5dbe6" stroke-width="1"/><g stroke="#a0a0a0" stroke-width="1.5"><line x1="5" y1="6" x2="9.5" y2="6"/><line x1="5" y1="9.8" x2="11.5" y2="9.8"/><line x1="5" y1="13.4" x2="11.5" y2="13.4"/><line x1="18" y1="6" x2="24.5" y2="6"/><line x1="18" y1="9.8" x2="24.5" y2="9.8"/><line x1="18" y1="13.4" x2="24.5" y2="13.4"/></g><path d="M15 1 H18.5 V4.5 L16.7 6 L15 4.5 Z" fill="#e88a84"/><path d="M12.5 19 H18 L15.2 21.5 Z" fill="#c8bfb0"/></svg><svg style="position:absolute;left:987px;top:856px" width="30" height="32" viewBox="0 0 30 32"><g stroke="#e0a2a6" stroke-width="4.4" stroke-linecap="round"><line x1="3.4" y1="4.4" x2="26.6" y2="27.8"/><line x1="26.6" y1="4.4" x2="3.4" y2="27.8"/></g></svg><svg style="position:absolute;left:2013px;top:840.5px" width="31" height="31" viewBox="0 0 31 31"><polygon points="25.82,12.11 29.30,12.93 29.30,17.67 25.82,18.49 25.05,20.34 26.93,23.38 23.58,26.73 20.54,24.85 18.69,25.62 17.87,29.10 13.13,29.10 12.31,25.62 10.46,24.85 7.42,26.73 4.07,23.38 5.95,20.34 5.18,18.49 1.70,17.67 1.70,12.93 5.18,12.11 5.95,10.26 4.07,7.22 7.42,3.87 10.46,5.75 12.31,4.98 13.13,1.50 17.87,1.50 18.69,4.98 20.54,5.75 23.58,3.87 26.93,7.22 25.05,10.26" fill="#6b6b6b"/><circle cx="15.5" cy="15.3" r="11.100000000000001" fill="#6b6b6b"/><circle cx="15.5" cy="15.3" r="4.9" fill="#fff"/></svg><div style="position:absolute;left:1138px;top:891px;width:2px;height:32px;background:#c4c4c4"></div><div style="position:absolute;left:1022px;top:923px;width:823px;height:2px;background:#c4c4c4"></div><div style="position:absolute;left:1846.5px;top:923px;width:158px;height:2px;background:#c4c4c4"></div><div class="t" style="left:1028px;top:898.07px;font-size:20px;line-height:20px;font-weight:400;color:#000;letter-spacing:0.25px;">5260</div><div class="t" style="left:799px;width:1200px;text-align:right;top:898.07px;font-size:20px;line-height:20px;font-weight:400;color:#000;letter-spacing:0.3px;">200.00</div><div style="position:absolute;left:1024px;top:928px;width:774px;height:23px;background:#f4f4f4"></div><div class="t" style="left:1027px;top:931.07px;font-size:20px;line-height:20px;font-weight:400;color:#555;letter-spacing:0.55px;font-style:italic;">Electricity - 3000.5260.K.K2 (6,088.99)</div><div style="position:absolute;left:985px;top:957px;width:1061px;height:1.5px;background:#6a6a6a"></div><svg style="position:absolute;left:987px;top:896px" width="30" height="22" viewBox="0 0 30 22"><rect x="1.6" y="1.6" width="27" height="17.5" fill="#e2e9f4" stroke="#cbbfae" stroke-width="1.1"/><line x1="15.1" y1="2" x2="15.1" y2="19" stroke="#d5dbe6" stroke-width="1"/><g stroke="#a0a0a0" stroke-width="1.5"><line x1="5" y1="6" x2="9.5" y2="6"/><line x1="5" y1="9.8" x2="11.5" y2="9.8"/><line x1="5" y1="13.4" x2="11.5" y2="13.4"/><line x1="18" y1="6" x2="24.5" y2="6"/><line x1="18" y1="9.8" x2="24.5" y2="9.8"/><line x1="18" y1="13.4" x2="24.5" y2="13.4"/></g><path d="M15 1 H18.5 V4.5 L16.7 6 L15 4.5 Z" fill="#e88a84"/><path d="M12.5 19 H18 L15.2 21.5 Z" fill="#c8bfb0"/></svg><svg style="position:absolute;left:987px;top:923px" width="30" height="32" viewBox="0 0 30 32"><g stroke="#e0a2a6" stroke-width="4.4" stroke-linecap="round"><line x1="3.4" y1="4.4" x2="26.6" y2="27.8"/><line x1="26.6" y1="4.4" x2="3.4" y2="27.8"/></g></svg><svg style="position:absolute;left:2013px;top:907.5px" width="31" height="31" viewBox="0 0 31 31"><polygon points="25.82,12.11 29.30,12.93 29.30,17.67 25.82,18.49 25.05,20.34 26.93,23.38 23.58,26.73 20.54,24.85 18.69,25.62 17.87,29.10 13.13,29.10 12.31,25.62 10.46,24.85 7.42,26.73 4.07,23.38 5.95,20.34 5.18,18.49 1.70,17.67 1.70,12.93 5.18,12.11 5.95,10.26 4.07,7.22 7.42,3.87 10.46,5.75 12.31,4.98 13.13,1.50 17.87,1.50 18.69,4.98 20.54,5.75 23.58,3.87 26.93,7.22 25.05,10.26" fill="#6b6b6b"/><circle cx="15.5" cy="15.3" r="11.100000000000001" fill="#6b6b6b"/><circle cx="15.5" cy="15.3" r="4.9" fill="#fff"/></svg><div style="position:absolute;left:985px;top:1200px;width:1061px;height:2px;background:#c4c4c4"></div><div style="position:absolute;left:985px;top:1202px;width:1061px;height:44px;background:#eeeeee"></div><div style="position:absolute;left:985px;top:1202px;width:35px;height:44px;background:#eeeeee"></div><div style="position:absolute;left:1020px;top:1202px;width:2px;height:44px;background:#c4c4c4"></div><div style="position:absolute;left:1030px;top:1209px;width:158px;height:31.6px;background:#f5f5f5"></div><div class="t" style="left:508.5px;width:1200px;text-align:center;top:1215.07px;font-size:20px;line-height:20px;font-weight:400;color:#808080;letter-spacing:0.25px;">Add Line Item</div><div class="t" style="left:634px;width:1200px;text-align:right;top:1212.07px;font-size:20px;line-height:20px;font-weight:400;color:#000;letter-spacing:0.2px;">Total:</div><div style="position:absolute;left:1853px;top:1209px;width:140.5px;height:22.5px;background:#f5f5f5"></div><div class="t" style="left:791px;width:1200px;text-align:right;top:1212.07px;font-size:20px;line-height:20px;font-weight:400;color:#000;letter-spacing:0.3px;">879.42</div><div style="position:absolute;left:1844.5px;top:1202px;width:2px;height:44px;background:#111"></div><div style="position:absolute;left:2004.5px;top:1202px;width:2px;height:44px;background:#111"></div><div style="position:absolute;left:195px;top:1244.5px;width:788px;height:1.5px;background:#c4c4c4"></div>
</div></body></html>
